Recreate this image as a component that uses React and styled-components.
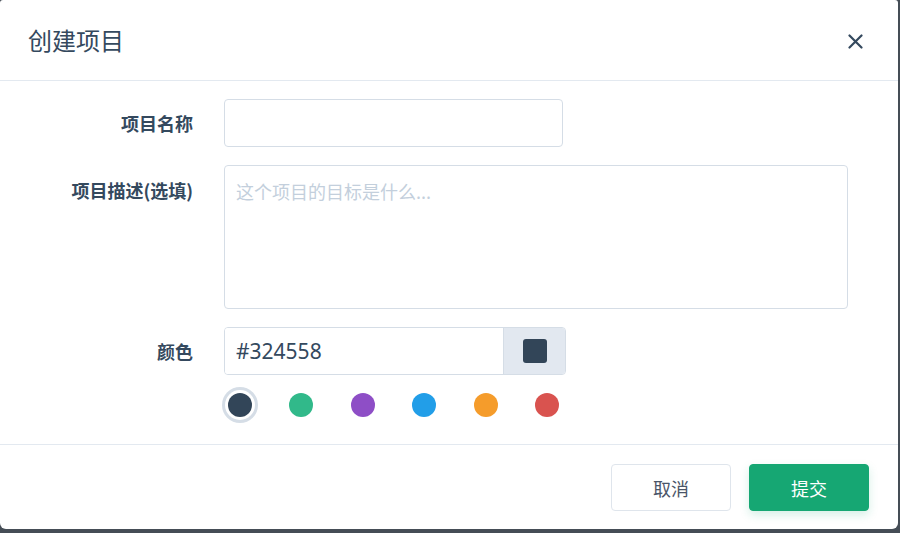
import React, { useState } from "react";
import styled, { createGlobalStyle } from "styled-components";

const GlobalStyle = createGlobalStyle`
  html, body { margin: 0; padding: 0; }
  body {
    background: #454d56;
    font-family: "Noto Sans", "Noto Sans CJK SC", sans-serif;
    color: #34495e;
  }
  * { box-sizing: border-box; }
`;

const Modal = styled.div`
  width: 898px;
  height: 529px;
  background: #ffffff;
  border-radius: 3px 3px 6px 6px;
  display: flex;
  flex-direction: column;
  overflow: hidden;
`;

const Header = styled.header`
  height: 81px;
  flex: none;
  display: flex;
  align-items: center;
  justify-content: space-between;
  padding: 0 35px 1px 28px;
  border-bottom: 1px solid #e3e9f0;
`;

const Title = styled.h2`
  margin: 0;
  font-family: "Noto Sans CJK SC", sans-serif;
  font-size: 24px;
  font-weight: 400;
  color: #34495e;
  line-height: 1;
`;

const CloseButton = styled.button`
  width: 15px;
  height: 15px;
  padding: 0;
  border: none;
  background: none;
  display: flex;
  cursor: pointer;
  margin-top: 3px;
`;

const Form = styled.div`
  flex: 1;
  display: grid;
  grid-template-columns: 165px 624px;
  column-gap: 31px;
  row-gap: 18px;
  padding: 18px 0 27px 28px;
  align-content: start;
`;

const Label = styled.label`
  justify-self: end;
  align-self: ${(p) => (p.$top ? "start" : "center")};
  padding-top: ${(p) => (p.$top ? "12px" : "0")};
  font-family: "Noto Sans CJK SC", sans-serif;
  font-size: 18px;
  font-weight: 700;
  line-height: 27px;
  color: #34495e;
`;

const TextInput = styled.input`
  width: 339px;
  height: 48px;
  border: 1px solid #d5dde6;
  border-radius: 4px;
  padding: 0 11px;
  font-family: "Noto Sans CJK SC", sans-serif;
  font-size: 18px;
  color: #34495e;
  outline: none;
  background: #fff;
`;

const TextArea = styled.textarea`
  width: 624px;
  height: 144px;
  border: 1px solid #d5dde6;
  border-radius: 4px;
  padding: 12px 11px;
  font-family: "Noto Sans CJK SC", sans-serif;
  font-size: 18px;
  line-height: 27px;
  color: #34495e;
  resize: none;
  outline: none;
  &::placeholder { color: #c3cfdc; }
`;

const ColorGroup = styled.div`
  width: 342px;
  height: 48px;
  display: flex;
  border: 1px solid #d5dde6;
  border-radius: 4px;
  overflow: hidden;
`;

const ColorText = styled.input`
  flex: 1;
  min-width: 0;
  border: none;
  padding: 0 11px;
  font-family: "Noto Sans", sans-serif;
  font-size: 21px;
  color: #34495e;
  outline: none;
`;

const SwatchButton = styled.div`
  width: 62px;
  flex: none;
  background: #e2e8f0;
  border-left: 1px solid #d5dde6;
  display: flex;
  align-items: center;
  justify-content: center;
`;

const SwatchSquare = styled.span`
  width: 24px;
  height: 24px;
  border-radius: 3px;
  background: ${(p) => p.$color};
`;

const Dots = styled.div`
  grid-column: 2;
  display: flex;
  gap: 37.4px;
  padding-left: 4px;
`;

const Dot = styled.button`
  width: 24px;
  height: 24px;
  border-radius: 50%;
  border: none;
  padding: 0;
  cursor: pointer;
  background: ${(p) => p.$color};
  box-shadow: ${(p) =>
    p.$active ? "0 0 0 3px #ffffff, 0 0 0 6px #d5dde6" : "none"};
`;

const Footer = styled.footer`
  flex: none;
  height: 85px;
  border-top: 1px solid #e3e9f0;
  display: flex;
  justify-content: flex-end;
  align-items: flex-start;
  gap: 18px;
  padding: 19px 29px 0 0;
`;

const Button = styled.button`
  width: 120px;
  height: 47px;
  border-radius: 4px;
  font-family: "Noto Sans CJK SC", sans-serif;
  font-size: 18px;
  font-weight: 400;
  cursor: pointer;
  border: 1px solid ${(p) => (p.$primary ? "#16a773" : "#dfe5ec")};
  background: ${(p) => (p.$primary ? "#16a773" : "#ffffff")};
  color: ${(p) => (p.$primary ? "#ffffff" : "#4a5568")};
  box-shadow: ${(p) =>
    p.$primary ? "0 4px 10px rgba(22, 167, 115, 0.18)" : "none"};
`;

const COLORS = ["#324558", "#31b98a", "#8e4ec6", "#229ee8", "#f59c2b", "#d9534f"];

export default function App() {
  const [color, setColor] = useState("#324558");
  return (
    <>
      <GlobalStyle />
      <Modal>
        <Header>
          <Title>创建项目</Title>
          <CloseButton aria-label="关闭">
            <svg width="15" height="15" viewBox="0 0 15 15">
              <path
                d="M1.5 1.5 L13.5 13.5 M13.5 1.5 L1.5 13.5"
                stroke="#34495e"
                strokeWidth="2.2"
                strokeLinecap="round"
                fill="none"
              />
            </svg>
          </CloseButton>
        </Header>
        <Form>
          <Label>项目名称</Label>
          <TextInput />
          <Label $top>项目描述(选填)</Label>
          <TextArea placeholder="这个项目的目标是什么..." />
          <Label>颜色</Label>
          <ColorGroup>
            <ColorText value={color} onChange={(e) => setColor(e.target.value)} />
            <SwatchButton>
              <SwatchSquare $color={color} />
            </SwatchButton>
          </ColorGroup>
          <Dots>
            {COLORS.map((c) => (
              <Dot key={c} $color={c} $active={c === color} onClick={() => setColor(c)} />
            ))}
          </Dots>
        </Form>
        <Footer>
          <Button>取消</Button>
          <Button $primary>提交</Button>
        </Footer>
      </Modal>
    </>
  );
}
